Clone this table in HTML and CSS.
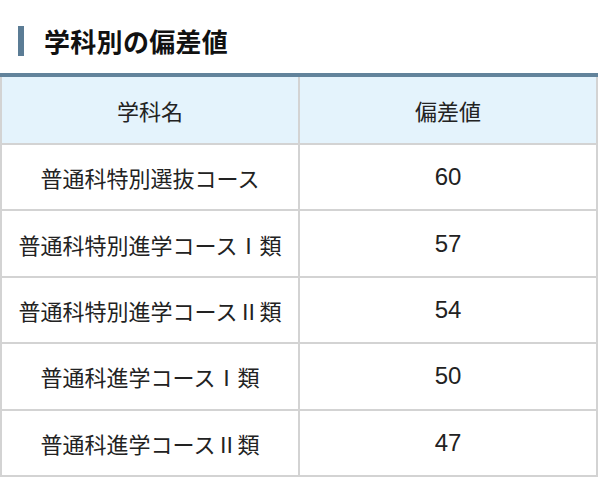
FILE: index.html
```html
<!DOCTYPE html>
<html lang="ja">
<head>
<meta charset="utf-8">
<link rel="stylesheet" href="styles.css">
</head>
<body>
<div class="page">
  <h2 class="title"><span class="bar"></span><span class="title-text">学科別の偏差値</span></h2>
  <table class="dev-table">
    <thead>
      <tr><th>学科名</th><th>偏差値</th></tr>
    </thead>
    <tbody>
      <tr><td>普通科特別選抜コース</td><td class="num">60</td></tr>
      <tr><td>普通科特別進学コースⅠ類</td><td class="num">57</td></tr>
      <tr><td>普通科特別進学コースⅡ類</td><td class="num">54</td></tr>
      <tr><td>普通科進学コースⅠ類</td><td class="num">50</td></tr>
      <tr><td>普通科進学コースⅡ類</td><td class="num">47</td></tr>
    </tbody>
  </table>
</div>
</body>
</html>
```

FILE: styles.css
```css
html, body {
  margin: 0;
  padding: 0;
  background: #ffffff;
}
body {
  font-family: "Noto Sans CJK JP", "Noto Sans", sans-serif;
  color: #222222;
}
.page {
  width: 600px;
}
.title {
  display: flex;
  align-items: flex-start;
  gap: 20px;
  margin: 0;
  padding: 26px 0 0 18px;
  height: 47px;
  box-sizing: border-box;
}
.bar {
  display: block;
  width: 6px;
  height: 30px;
  background: #5b7c95;
}
.title-text {
  font-size: 26px;
  font-weight: 700;
  line-height: 30px;
  color: #111111;
  letter-spacing: 0.3px;
}
.dev-table {
  margin-top: 26px;
  width: 598px;
  border-collapse: collapse;
  table-layout: fixed;
  font-size: 22px;
}
.dev-table th,
.dev-table td {
  border: 2px solid #d3d3d3;
  text-align: center;
  vertical-align: middle;
  padding: 0;
  height: 64.4px;
  font-weight: 400;
  color: #222222;
}
.dev-table thead th {
  background: #e4f3fc;
  border-top: 4px solid #62839b;
  height: 66px;
}
.dev-table .num {
  font-family: "Liberation Sans", "Noto Sans CJK JP", sans-serif;
  font-size: 24px;
}
```
